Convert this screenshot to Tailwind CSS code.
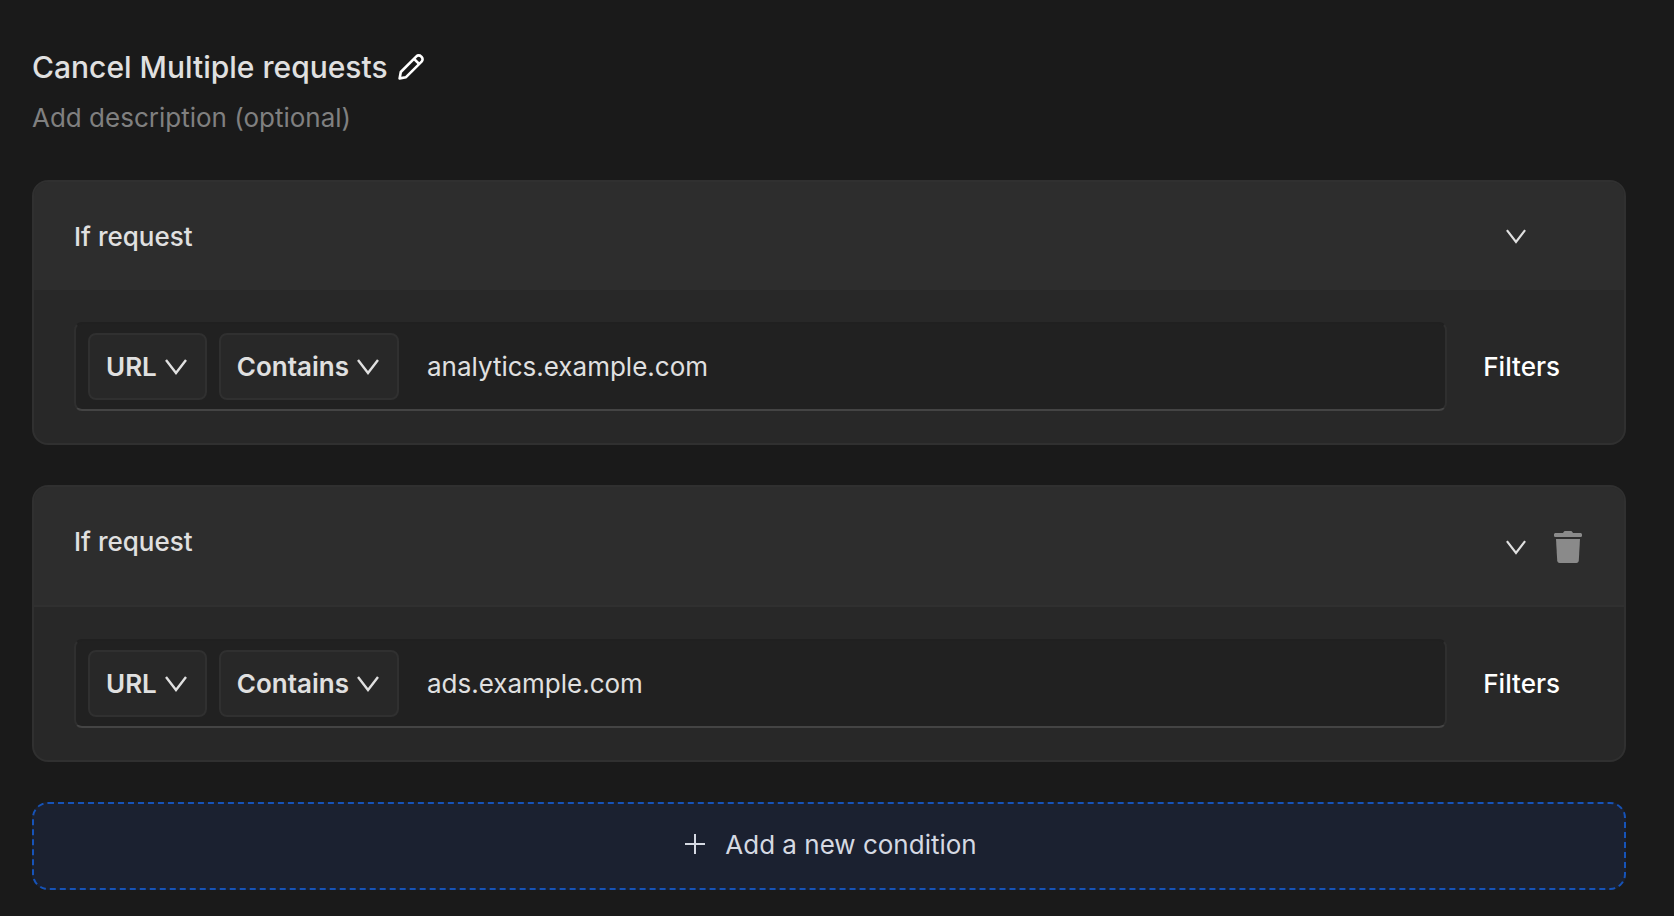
<!DOCTYPE html>
<html lang="en">
<head>
  <meta charset="UTF-8">
  <meta name="viewport" content="width=device-width, initial-scale=1.0">
  <title>Cancel Multiple requests</title>
  <script src="https://cdn.jsdelivr.net/npm/@tailwindcss/browser@4"></script>
</head>
<body class="min-h-screen bg-[#1a1a1a] pt-[47px] pr-12 pb-6 pl-8 font-['Inter',sans-serif] text-[26px] text-[#e0e0e0]">

  <!-- shared icons -->
  <svg class="hidden">
    <symbol id="down" viewBox="0 0 22 16">
      <path d="M1 1l10 13L21 1" fill="none" stroke="currentColor" stroke-width="2.4" />
    </symbol>
  </svg>

  <header>
    <div class="flex h-10 items-center gap-2.5">
      <h1 class="text-[30px] font-medium">Cancel Multiple requests</h1>
      <button type="button" aria-label="Edit name" class="text-white">
        <svg class="size-[26px]" viewBox="0 0 26 26" fill="none" stroke="currentColor" stroke-width="2.6" stroke-linejoin="round">
          <path d="M1.600 24.400l1.200-6.400L18.400 2.400a3.200 3.200 0 0 1 4.600 0l.6.6a3.200 3.200 0 0 1 0 4.600L8 23.200z" />
          <path d="M16 4.800l5.200 5.200" />
        </svg>
      </button>
    </div>
    <input type="text" aria-label="Description" placeholder="Add description (optional)" class="mt-2.5 block h-10 w-full bg-transparent outline-none placeholder:text-[#808080]">
  </header>

  <main class="mt-[43px] flex flex-col gap-10">
    <section class="overflow-hidden rounded-2xl border-2 border-[#303030] bg-[#282828]">
      <div class="flex items-start justify-between border-b-2 border-[#2d2d2d] bg-[#2d2d2d] px-10 pt-8 pb-[30px]">
        <h2 class="leading-[46px] font-medium -mb-0.5">If request</h2>
        <button type="button" aria-label="Collapse" class="mr-13 flex h-11 w-8 items-center justify-center">
          <svg class="h-[15px] w-5"><use href="#down" /></svg>
        </button>
      </div>
      <div class="flex items-center gap-3 px-10 py-8">
        <div class="flex flex-1 items-center gap-3 rounded-lg border-2 border-t-[#202020] border-x-[#2f2f2f] border-b-[#444] bg-[#212121] px-3 py-[9px]">
          <div class="relative">
            <select aria-label="Match on" class="block h-[67px] field-sizing-content appearance-none rounded-lg border-2 border-[#303030] bg-[#282828] pr-12 pl-4 font-semibold outline-none">
              <option>URL</option>
            </select>
            <svg class="pointer-events-none absolute top-[26px] right-5 h-4 w-[22px]"><use href="#down" /></svg>
          </div>
          <div class="relative">
            <select aria-label="Operator" class="block h-[67px] field-sizing-content appearance-none rounded-lg border-2 border-[#303030] bg-[#282828] pr-12 pl-4 font-semibold outline-none">
              <option>Contains</option>
            </select>
            <svg class="pointer-events-none absolute top-[26px] right-5 h-4 w-[22px]"><use href="#down" /></svg>
          </div>
          <input type="text" aria-label="Value" value="analytics.example.com" class="h-[67px] min-w-0 flex-1 bg-transparent px-4 outline-none">
        </div>
        <button type="button" class="px-6 font-medium text-white">Filters</button>
      </div>
    </section>

    <section class="overflow-hidden rounded-2xl border-2 border-[#303030] bg-[#282828]">
      <div class="flex items-start justify-between border-b-2 border-[#303030] bg-[#2d2d2d] px-10 pt-8 pb-[30px]">
        <h2 class="leading-[46px] font-medium">If request</h2>
        <div class="flex h-14 items-center gap-5">
          <button type="button" aria-label="Collapse" class="flex h-14 w-8 items-center justify-center">
            <svg class="h-[15px] w-5"><use href="#down" /></svg>
          </button>
          <button type="button" aria-label="Delete condition" class="flex h-14 w-8 items-center justify-center text-[#8a8a8a]">
            <svg class="h-8 w-7" viewBox="0 0 28 32" fill="currentColor">
              <path d="M9.5 1.2C9.8.4 10.4 0 11.2 0h5.6c.8 0 1.4.4 1.7 1.2l.5.8h7.4c.9 0 1.6.7 1.6 1.6v.8c0 .9-.7 1.6-1.6 1.6H1.6C.7 6 0 5.300 0 4.400v-.8C0 2.700.7 2 1.600 2H9z" />
              <path d="M2 8h24l-1.200 21.600c-.1 1.400-1 2.400-2.400 2.400H5.600c-1.400 0-2.300-1-2.400-2.400z" />
            </svg>
          </button>
        </div>
      </div>
      <div class="flex items-center gap-3 px-10 py-8">
        <div class="flex flex-1 items-center gap-3 rounded-lg border-2 border-t-[#202020] border-x-[#2f2f2f] border-b-[#444] bg-[#212121] px-3 py-[9px]">
          <div class="relative">
            <select aria-label="Match on" class="block h-[67px] field-sizing-content appearance-none rounded-lg border-2 border-[#303030] bg-[#282828] pr-12 pl-4 font-semibold outline-none">
              <option>URL</option>
            </select>
            <svg class="pointer-events-none absolute top-[26px] right-5 h-4 w-[22px]"><use href="#down" /></svg>
          </div>
          <div class="relative">
            <select aria-label="Operator" class="block h-[67px] field-sizing-content appearance-none rounded-lg border-2 border-[#303030] bg-[#282828] pr-12 pl-4 font-semibold outline-none">
              <option>Contains</option>
            </select>
            <svg class="pointer-events-none absolute top-[26px] right-5 h-4 w-[22px]"><use href="#down" /></svg>
          </div>
          <input type="text" aria-label="Value" value="ads.example.com" class="h-[67px] min-w-0 flex-1 bg-transparent px-4 outline-none">
        </div>
        <button type="button" class="px-6 font-medium text-white">Filters</button>
      </div>
    </section>

    <button type="button" class="flex h-22 items-center justify-center gap-5 rounded-2xl border-2 border-dashed border-[#1653b8] bg-[#1b2130] pb-1 pl-1 text-[#d5d9e2]">
      <svg class="size-5" viewBox="0 0 20 20" stroke="currentColor" stroke-width="2"><path d="M10 0v20M0 10h20" /></svg>
      Add a new condition
    </button>
  </main>

</body>
</html>
